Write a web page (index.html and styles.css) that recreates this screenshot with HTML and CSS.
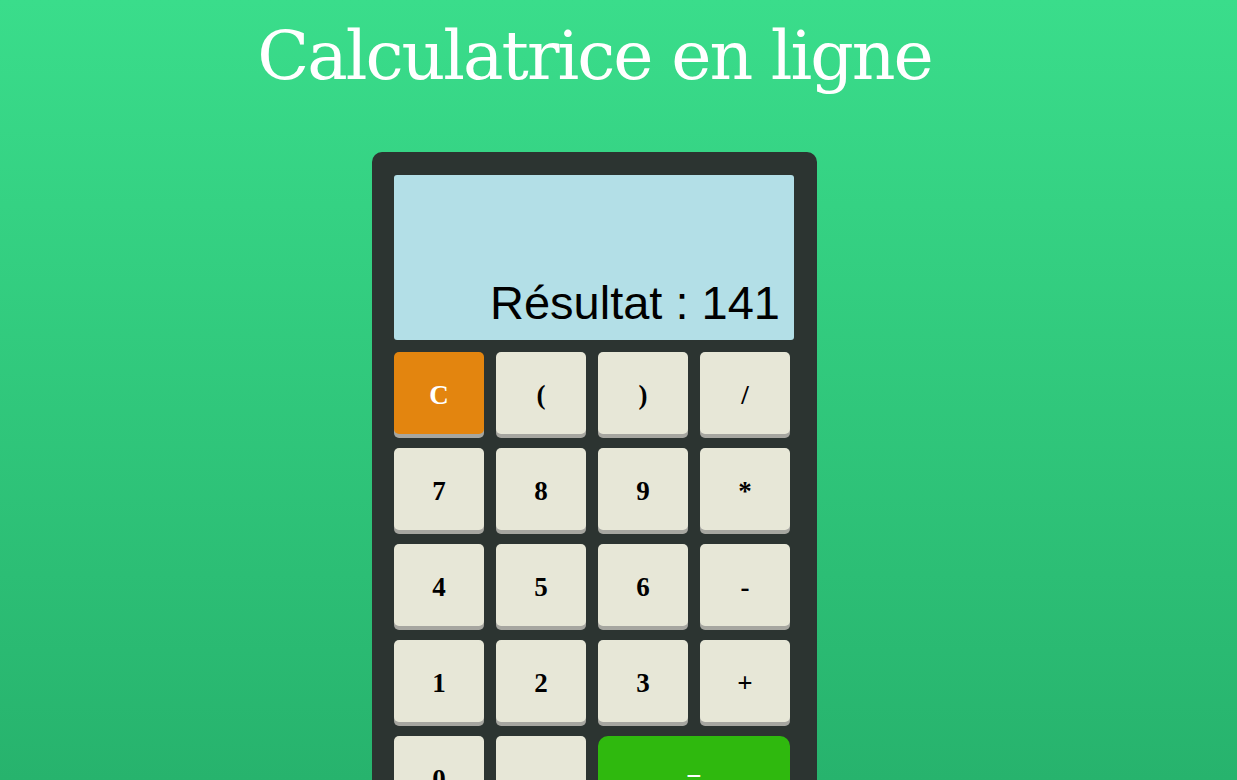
FILE: index.html
```html
<!DOCTYPE html>
<html lang="fr">
<head>
<meta charset="utf-8">
<title>Calculatrice en ligne</title>
<link rel="stylesheet" href="styles.css">
</head>
<body>
<div class="page">
  <h1 class="title">Calculatrice en ligne</h1>
  <div class="calc">
    <div class="display"><span class="result">Résultat : 141</span></div>
    <div class="keys">
      <button class="key key-clear">C</button>
      <button class="key">(</button>
      <button class="key">)</button>
      <button class="key">/</button>
      <button class="key">7</button>
      <button class="key">8</button>
      <button class="key">9</button>
      <button class="key">*</button>
      <button class="key">4</button>
      <button class="key">5</button>
      <button class="key">6</button>
      <button class="key">-</button>
      <button class="key">1</button>
      <button class="key">2</button>
      <button class="key">3</button>
      <button class="key">+</button>
      <button class="key">0</button>
      <button class="key">.</button>
      <button class="key key-equal">=</button>
    </div>
  </div>
</div>
</body>
</html>
```

FILE: styles.css
```css
html, body {
  margin: 0;
  padding: 0;
}
body {
  background: linear-gradient(#3add8b, #27b36d) fixed;
  min-height: 100vh;
}
.page {
  width: 1189px;
  display: flex;
  flex-direction: column;
  align-items: center;
  padding-bottom: 40px;
}
.title {
  margin: 22px 0 0 0;
  font-family: "DejaVu Serif", Georgia, serif;
  font-weight: normal;
  font-size: 68px;
  line-height: 68px;
  color: #ffffff;
  letter-spacing: -2px;
}
.calc {
  margin-top: 62px;
  width: 445px;
  box-sizing: border-box;
  background: #2c3431;
  border-radius: 10px;
  padding: 23px 23px 24px 22px;
}
.display {
  height: 165px;
  background: #b3dfe7;
  border-radius: 3px;
  display: flex;
  align-items: flex-end;
  justify-content: flex-end;
  padding: 0 14px 13px 0;
  box-sizing: border-box;
}
.result {
  font-family: "Liberation Sans", Arial, sans-serif;
  font-size: 47px;
  line-height: 48px;
  color: #000;
}
.keys {
  margin-top: 12px;
  width: 396px;
  display: grid;
  grid-template-columns: repeat(4, 90px);
  grid-auto-rows: 82px;
  column-gap: 12px;
  row-gap: 14px;
}
.key {
  border: none;
  border-radius: 5px;
  background: #e7e7d7;
  box-shadow: 0 4px 0 #a6a6a0;
  font-family: "Liberation Serif", "Times New Roman", serif;
  font-weight: bold;
  font-size: 27px;
  line-height: 1;
  color: #000;
  display: flex;
  align-items: center;
  justify-content: center;
  padding: 4px 0 0 0;
}
.key-clear {
  background: #e3850f;
  color: #fff;
}
.key-equal {
  grid-column: span 2;
  background: #2fb90e;
  color: #fff;
  border-radius: 10px;
}
```
